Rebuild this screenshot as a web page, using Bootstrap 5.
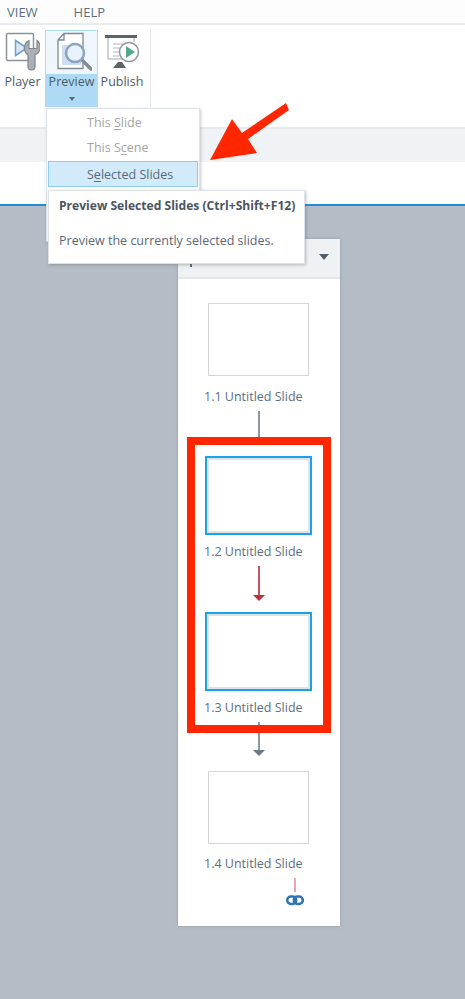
<!DOCTYPE html>
<html lang="en">
<head>
<meta charset="UTF-8">
<title>Preview Selected Slides</title>
<link href="https://cdn.jsdelivr.net/npm/bootstrap@5.3.3/dist/css/bootstrap.min.css" rel="stylesheet">
<style>
  html, body { width: 465px; height: 999px; overflow: hidden; }
  body { position: relative; background: #fff; font-family: "Open Sans", "Noto Sans", sans-serif; font-size: 12.5px; color: #5d6b78; }
  .tab-strip { height: 25px; background: #fdfdfe; border-bottom: 2px solid #e8ecf0; padding-left: 7px; gap: 36px; line-height: 24px; font-size: 13px; color: #5c6f80; }
  .ribbon-bar { height: 104px; border-bottom: 2px solid #e6eaee; padding: 5px 0 0 0; }
  .rib-group { height: 77px; width: 151px; border-right: 1px solid #e2e6ea; }
  .rib-btn { width: 46px; text-align: center; line-height: 16px; color: #4d5c69; }
  .rib-btn svg { display: block; margin: 0 auto; }
  .rib-first { width: 45px; }
  .rib-first svg { margin: 0; }
  .rib-active { width: 53px; background: #aedaf5; border: 1px solid #aedaf5; height: 77px; }
  .rib-active .rib-top { height: 43px; background: #eff7fd; }
  .rib-label { margin-top: 2px; }
  .rib-active .rib-label { margin-top: 0; }
  .rib-last { margin-left: 2px; width: 44px; white-space: nowrap; }
  .drop-caret { width: 0; height: 0; border: 3px solid transparent; border-top: 4px solid #5d6b78; margin: 7px auto 0; }
  .sub-row { height: 33px; background: #f0f3f6; }
  .white-row { height: 44px; border-bottom: 2px solid #1c8fdb; }
  .work-area { background: #b5bcc5; height: 793px; padding: 33px 0 0 178px; }
  .slide-panel { position: relative; width: 162px; height: 687px; background: #fff; box-shadow: 0 0 3px rgba(90,100,110,.35); }
  .panel-head { height: 40px; background: #eff2f5; border-bottom: 2px solid #e2e6eb; padding: 15px 11px 0 0; }
  .head-caret { width: 0; height: 0; border: 5px solid transparent; border-top: 6px solid #4f5e69; border-bottom: 0; }
  .head-tick { position: absolute; top: 25px; width: 2px; height: 3px; background: #5d6b78; }
  .slide-list { padding-top: 24px; }
  .slide-item { position: relative; height: 108px; }
  .thumb { width: 101px; height: 73px; margin-left: 30px; background: #fff; border: 1px solid #d2d4d6; }
  .thumb-sel { width: 107px; height: 79px; margin-left: 27px; border: 2px solid #1ba3ea; box-shadow: inset 0 0 0 2px #e0e3e5; }
  .slide-cap { margin-top: 12px; margin-left: 26px; line-height: 17px; color: #5e6f80; white-space: nowrap; }
  .cap-sel { margin-top: 8px; }
  .cap-last { margin-top: 11px; }
  .link-line { position: absolute; left: 80px; top: 0; }
  .ctx-menu { position: absolute; left: 46px; top: 108px; width: 154px; height: 134px; background: #fff; border: 1px solid #dde3e8; box-shadow: 1px 1px 3px rgba(80,90,100,.3); padding: 1px; }
  .ctx-item { height: 25px; line-height: 25px; padding-left: 39px; color: #a7a5a3; }
  .ctx-sel { height: 26px; color: #58697a; background: #d2ebfa; border: 1px solid #8fcdf0; padding-left: 38px; margin-top: 1px; }
  .ctx-item u { text-underline-offset: 2px; }
  .tip-box { position: absolute; left: 48px; top: 190px; width: 257px; height: 74px; background: #fff; border: 1px solid #dde3e8; box-shadow: 1px 1px 3px rgba(80,90,100,.4); padding: 6px 0 0 10px; color: #5b6775; white-space: nowrap; }
  .tip-title { font-weight: 700; line-height: 17px; color: #4b5560; font-size: 12.1px; }
  .tip-body { margin-top: 18px; line-height: 17px; }
  .red-box { position: absolute; left: 187px; top: 437px; width: 144px; height: 296px; border: 8px solid #ff2600; }
  .red-arrow { position: absolute; left: 205px; top: 100px; }
</style>
</head>
<body>

<div class="tab-strip d-flex">
  <span>VIEW</span>
  <span>HELP</span>
</div>

<div class="ribbon-bar">
  <div class="rib-group d-flex">
    <div class="rib-btn rib-first">
      <svg width="40" height="42" viewBox="0 0 40 42">
        <rect x="6.500" y="3.500" width="27" height="27" rx="1.500" fill="#fff" stroke="#8a9298" stroke-width="1.500"/>
        <path d="M15.500 10.500 L27 18 L15.500 25.500 Z" fill="#dbe9f6" stroke="#6f9fd0" stroke-width="1.500"/>
        <path d="M29 10.500 a8.500 8.500 0 0 0 -1 14.500 v11.500 a3.500 3.500 0 0 0 7 0 v-11.500 a8.500 8.500 0 0 0 2 -14.500 v8 h-8 z" fill="#aab0b4" stroke="#7f878c" stroke-width="1.200"/>
      </svg>
      <div class="rib-label">Player</div>
    </div>
    <div class="rib-btn rib-active">
      <div class="rib-top">
        <svg width="40" height="41" viewBox="0 0 40 41">
          <path d="M12 2.500 H31 V37.500 H6 V9 Z M12 2.500 V9 H6" fill="#fff" stroke="#7f8a92" stroke-width="1.300"/>
          <rect x="10" y="14" width="19" height="20" fill="#cfdcf2"/>
          <path d="M30 29 L39 38" stroke="#848c92" stroke-width="3.500" stroke-linecap="round"/>
          <circle cx="23" cy="22" r="9" fill="#e9f1fa" stroke="#8ba4c2" stroke-width="2.500"/>
        </svg>
      </div>
      <div class="rib-label">Preview</div>
      <div class="drop-caret"></div>
    </div>
    <div class="rib-btn rib-last">
      <svg width="36" height="42" viewBox="0 0 36 42">
        <rect x="1" y="5" width="32" height="3" fill="#5c6469"/>
        <path d="M4 8 V29 H18 M30 8 V12" fill="none" stroke="#a0a6aa"/>
        <path d="M9 14 h10 M9 18 h7 M9 22 h7 M9 26 h6" stroke="#b3b8bc"/>
        <circle cx="25" cy="22" r="9.500" fill="#fff" stroke="#8f979c" stroke-width="1.500"/>
        <path d="M22 16 L31 22 L22 28 Z" fill="#4fa98a"/>
        <path d="M9 38 L14 32 L18 32 L22 38 Z" fill="#5c6469"/>
      </svg>
      <div class="rib-label">Publish</div>
    </div>
  </div>
</div>

<div class="sub-row"></div>
<div class="white-row"></div>

<div class="work-area">
  <div class="slide-panel">
    <div class="panel-head d-flex justify-content-end">
      <span class="head-tick" style="left:12px"></span>
      <div class="head-caret"></div>
    </div>
    <div class="slide-list">
      <div class="slide-item" style="height:153px">
        <div class="thumb"></div>
        <div class="slide-cap">1.1 Untitled Slide</div>
        <svg class="link-line" style="top:108px" width="2" height="30"><rect width="2" height="30" fill="#8a98a3"/></svg>
      </div>
      <div class="slide-item" style="height:156px">
        <div class="thumb thumb-sel"></div>
        <div class="slide-cap cap-sel">1.2 Untitled Slide</div>
        <svg class="link-line" style="top:110px;left:75px" width="12" height="35">
          <rect x="5" width="2" height="30" fill="#c4555f"/>
          <path d="M0 29 H12 L6 35 Z" fill="#b5323c"/>
        </svg>
      </div>
      <div class="slide-item" style="height:159px">
        <div class="thumb thumb-sel"></div>
        <div class="slide-cap cap-sel">1.3 Untitled Slide</div>
        <svg class="link-line" style="top:110px;left:75px" width="12" height="35">
          <rect x="5" width="2" height="30" fill="#8a98a3"/>
          <path d="M0 28 H12 L6 34 Z" fill="#697a84"/>
        </svg>
      </div>
      <div class="slide-item">
        <div class="thumb"></div>
        <div class="slide-cap cap-last">1.4 Untitled Slide</div>
        <svg class="link-line" style="top:107px;left:108px" width="18" height="28" viewBox="0 0 18 28">
          <rect x="8.500" y="0" width="1" height="14" fill="#d0505a"/>
          <rect x="1.200" y="18.500" width="9" height="7.500" rx="3.700" fill="none" stroke="#2f74b5" stroke-width="2.500"/>
          <rect x="7.800" y="18.500" width="9" height="7.500" rx="3.700" fill="none" stroke="#2f74b5" stroke-width="2.500"/>
        </svg>
      </div>
    </div>
  </div>
</div>

<!-- menu and tooltip sit on top of everything -->
<div class="ctx-menu">
  <div class="ctx-item">This <u>S</u>lide</div>
  <div class="ctx-item">This S<u>c</u>ene</div>
  <div class="ctx-item ctx-sel">S<u>e</u>lected Slides</div>
</div>
<div class="tip-box">
  <div class="tip-title">Preview Selected Slides (Ctrl+Shift+F12)</div>
  <div class="tip-body">Preview the currently selected slides.</div>
</div>

<div class="red-box"></div>
<svg class="red-arrow" width="90" height="65" viewBox="205 100 90 65">
  <path d="M286 103 L289 110 L248 139 L257 153 L210 160 L232 119 L242 133 Z" fill="#ff2600"/>
</svg>

<script src="https://cdn.jsdelivr.net/npm/bootstrap@5.3.3/dist/js/bootstrap.bundle.min.js"></script>
</body>
</html>
